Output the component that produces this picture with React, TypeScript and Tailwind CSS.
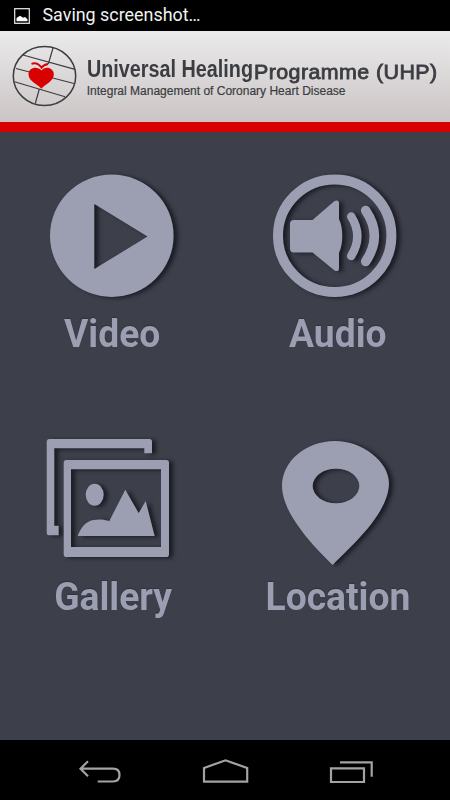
import type { ReactNode } from "react";

type MenuItemProps = {
  label: string;
  labelClass?: string;
  children: ReactNode;
};

function MenuItem({ label, labelClass = "", children }: MenuItemProps) {
  return (
    <button type="button" className="flex h-[264px] flex-col items-center">
      <svg
        viewBox="0 0 225 140"
        fill="#9c9eb1"
        className="h-[140px] w-[225px] drop-shadow-[4px_1px_2px_rgba(20,21,28,0.85)]"
      >
        {children}
      </svg>
      <span
        className={`scale-x-[0.98] text-[38px] leading-[50px] font-bold whitespace-nowrap text-[#9c9eb1] [text-shadow:0_-1px_1px_rgba(20,21,28,0.3)] ${labelClass}`}
      >
        {label}
      </span>
    </button>
  );
}

function StatusBar() {
  return (
    <div className="flex h-[31px] items-center bg-black pl-[14px]">
      <svg viewBox="0 0 16 16" className="h-4 w-4">
        <rect x="0.7" y="0.7" width="14.6" height="14.6" fill="none" stroke="#eee" strokeWidth="1.2" />
        <path d="M2.5 13.3V10L6 7.7L9 9.8L11 9L13.5 11.2V13.3Z" fill="#fff" />
      </svg>
      <span className="mb-px ml-[12.5px] text-[17.9px] leading-[30px] whitespace-nowrap text-[#f2f2f2]">
        Saving screenshot…
      </span>
    </div>
  );
}

function Header() {
  return (
    <header className="flex h-[101px] border-b-[10px] border-[#d80000] bg-linear-to-b from-[#ebebeb] to-[#cbc4c5] pl-3 font-['Liberation_Sans',Arial,sans-serif] text-[#3c3d42]">
      <svg viewBox="12 45 66 62" className="mt-[14px] h-[62px] w-[66px] shrink-0">
        <g fill="none" stroke="#3c3d42" strokeWidth="1.2">
          <ellipse cx="44.5" cy="76" rx="31.2" ry="29.5" strokeWidth="1.5" />
          <path d="M23 55L75 69.3M16 68.5L74 83.5M14.5 81.7L65 96.8M53 48L48.3 64M39.3 89L35.3 103.5" />
        </g>
        <path
          d="M41.3 88.8C38 84 28.5 81.5 28.5 74.3C28.5 67 37.5 65.8 41.5 70.5C45 65.8 53.8 67.5 53.8 74.5C53.8 81.5 44.5 84.5 41.3 88.8Z"
          fill="#d80000"
        />
        <path d="M31.5 63.8C35 62.6 39 64 41.5 67.7C43 65.5 45 64.5 48 64" fill="none" stroke="#d80000" strokeWidth="1.8" />
      </svg>
      <div className="ml-[8.7px] flex flex-col">
        <div className="mt-[25px] flex h-[28px] items-start whitespace-nowrap">
          <h1 className="w-[167px] origin-left scale-x-[0.86] text-[23px] leading-[26px] font-bold">
            Universal Healing
          </h1>
          <span className="mt-[3px] origin-left scale-x-[1.07] text-[20px] leading-[26px] tracking-[0.4px] [-webkit-text-stroke:0.8px_#3c3d42]">
            Programme (UHP)
          </span>
        </div>
        <p className="origin-left text-[12px] leading-[14px] whitespace-nowrap [-webkit-text-stroke:0.2px_#3c3d42]">
          Integral Management of Coronary Heart Disease
        </p>
      </div>
    </header>
  );
}

function NavBar() {
  return (
    <nav className="flex h-[60px] justify-between bg-black pr-[75px] pl-[76px]">
      <svg viewBox="0 0 48 60" className="h-[60px] w-12" fill="none" stroke="#a3a3a3" strokeWidth="2.2">
        <path d="M12 21.3L4.5 28.7L12 36.3M4.5 28.7H37C41 28.7 43.5 31 43.5 35C43.5 39 41 41.5 37 41.5H21.7" />
      </svg>
      <svg viewBox="0 0 48 60" className="h-[60px] w-12" fill="none" stroke="#a3a3a3" strokeWidth="2.2">
        <path d="M2 28L23.5 20.3L45.2 28V41.7H2Z" />
      </svg>
      <svg viewBox="0 0 48 60" className="h-[60px] w-12" fill="none" stroke="#a3a3a3" strokeWidth="2.2">
        <path d="M4 28.3H37V42H4ZM13 22.3H44.7V36.7" />
      </svg>
    </nav>
  );
}

export default function App() {
  return (
    <div className="flex h-[800px] w-[450px] flex-col overflow-hidden bg-[#3d3f4b] font-[Roboto,sans-serif]">
      <StatusBar />
      <Header />

      {/* Main menu */}
      <main className="grid flex-1 grid-cols-2 content-start pt-[36px]">
        <MenuItem label="Video" labelClass="mt-px">
          <path
            fillRule="evenodd"
            d="M50 67.7A61.8 61.2 0 0 1 173.6 67.7A61.8 61.2 0 0 1 50 67.7ZM94.3 36V101L147.5 68.5Z"
          />
        </MenuItem>
        <MenuItem label="Audio" labelClass="mt-px ml-[1.5px]">
          <ellipse cx="109.7" cy="67.7" rx="56.7" ry="56.3" fill="none" stroke="#9c9eb1" strokeWidth="10" />
          <path d="M69 52H87.5L109.5 33Q114 31 114 35.5V51Q117.3 58 117.3 68Q117.3 78 114 85V100Q114 104.5 109.5 102.5L87.5 84.5H69Q65 84.5 65 80.5V56Q65 52 69 52Z" />
          <path
            d="M126.2 48.5Q138.5 68 126.2 88"
            fill="none"
            stroke="#9c9eb1"
            strokeWidth="8.5"
            strokeLinecap="round"
          />
          <path
            d="M140.7 42.5Q158 68 140.7 93.5"
            fill="none"
            stroke="#9c9eb1"
            strokeWidth="9.5"
            strokeLinecap="round"
          />
        </MenuItem>
        <MenuItem label="Gallery" labelClass="ml-px">
          <path d="M49 7H149.5Q152 7 152 9.5V21.3H144.3V16.3H54.3V93.7H58.7V103.3H49Q46.7 103.3 46.7 101V9.5Q46.7 7 49 7Z" />
          <path
            fillRule="evenodd"
            d="M66.5 28H166.2Q169 28 169 30.8V122.2Q169 125 166.2 125H66.5Q63.7 125 63.7 122.2V30.8Q63.7 28 66.5 28ZM71 37.3V115H161V37.3Z"
          />
          <ellipse cx="94.7" cy="62.7" rx="9" ry="11" />
          <path d="M77.7 104C81 95 86 90 92 88.3C97 87 104 87 109.3 89L125.3 57.7L138.7 81L145.7 69L154.7 104Z" />
        </MenuItem>
        <MenuItem label="Location">
          <path
            fillRule="evenodd"
            d="M107.7 133C90 116 57 82 57 54C57 29 81 9 110 9C138 9 164 30 164 51C164 82 125 115 107.7 133ZM87.7 54A23.3 17.3 0 0 0 134.3 54A23.3 17.3 0 0 0 87.7 54Z"
          />
        </MenuItem>
      </main>

      <NavBar />
    </div>
  );
}
